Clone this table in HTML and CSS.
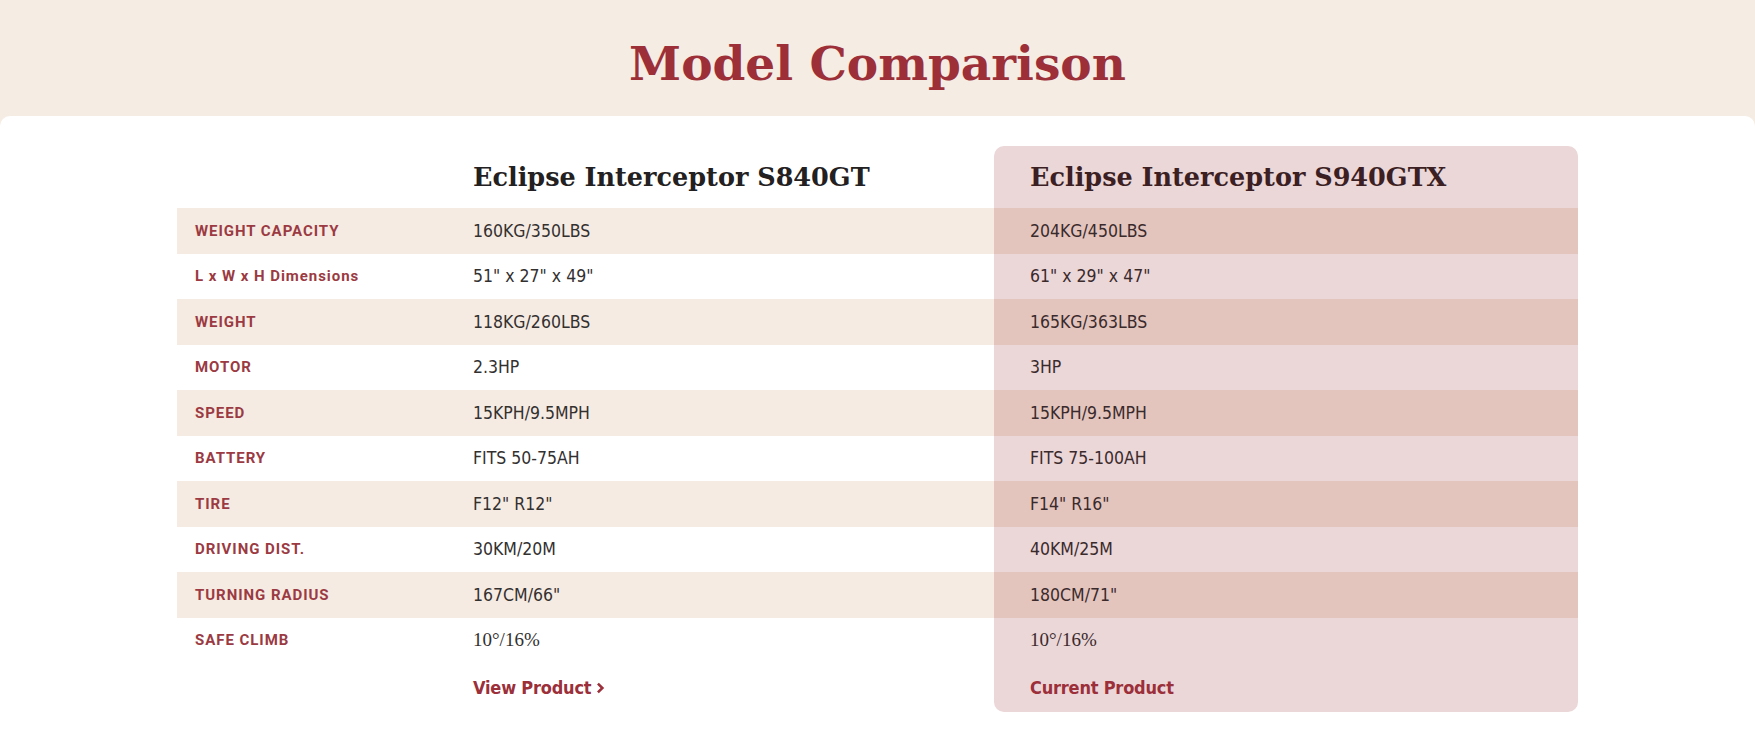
FILE: index.html
```html
<!DOCTYPE html>
<html lang="en">
<head>
<meta charset="utf-8">
<title>Model Comparison</title>
<link rel="stylesheet" href="styles.css">
</head>
<body>
<header class="page-head">
  <h1 class="page-title">Model Comparison</h1>
</header>
<main class="card">
  <div class="compare">
    <div class="row head">
      <div class="cell label"></div>
      <div class="cell val"><h2 class="model">Eclipse Interceptor S840GT</h2></div>
      <div class="cell cur"><h2 class="model">Eclipse Interceptor S940GTX</h2></div>
    </div>
    <div class="row band">
      <div class="cell label">WEIGHT CAPACITY</div>
      <div class="cell val">160KG/350LBS</div>
      <div class="cell cur">204KG/450LBS</div>
    </div>
    <div class="row">
      <div class="cell label">L x W x H Dimensions</div>
      <div class="cell val">51" x 27" x 49"</div>
      <div class="cell cur">61" x 29" x 47"</div>
    </div>
    <div class="row band">
      <div class="cell label">WEIGHT</div>
      <div class="cell val">118KG/260LBS</div>
      <div class="cell cur">165KG/363LBS</div>
    </div>
    <div class="row">
      <div class="cell label">MOTOR</div>
      <div class="cell val">2.3HP</div>
      <div class="cell cur">3HP</div>
    </div>
    <div class="row band">
      <div class="cell label">SPEED</div>
      <div class="cell val">15KPH/9.5MPH</div>
      <div class="cell cur">15KPH/9.5MPH</div>
    </div>
    <div class="row">
      <div class="cell label">BATTERY</div>
      <div class="cell val">FITS 50-75AH</div>
      <div class="cell cur">FITS 75-100AH</div>
    </div>
    <div class="row band">
      <div class="cell label">TIRE</div>
      <div class="cell val">F12" R12"</div>
      <div class="cell cur">F14" R16"</div>
    </div>
    <div class="row">
      <div class="cell label">DRIVING DIST.</div>
      <div class="cell val">30KM/20M</div>
      <div class="cell cur">40KM/25M</div>
    </div>
    <div class="row band">
      <div class="cell label">TURNING RADIUS</div>
      <div class="cell val">167CM/66"</div>
      <div class="cell cur">180CM/71"</div>
    </div>
    <div class="row">
      <div class="cell label">SAFE CLIMB</div>
      <div class="cell val deg">10°/16%</div>
      <div class="cell cur deg">10°/16%</div>
    </div>
    <div class="row foot">
      <div class="cell label"></div>
      <div class="cell val"><a class="link" href="#">View Product <svg class="chev" viewBox="0 0 10 14" width="9" height="12"><path d="M2 1.8 L7.2 7 L2 12.2" fill="none" stroke="currentColor" stroke-width="3"/></svg></a></div>
      <div class="cell cur"><span class="link">Current Product</span></div>
    </div>
  </div>
</main>
</body>
</html>
```

FILE: styles.css
```css
* { box-sizing: border-box; }
html, body { margin: 0; padding: 0; }
body {
  background: #f5ece3;
  font-family: "DejaVu Sans Condensed", "Roboto", sans-serif;
  color: #2d2a2a;
}
.page-head {
  padding: 36px 0 24px;
  text-align: center;
}
.page-title {
  margin: 0;
  font-family: "DejaVu Serif", "Liberation Serif", serif;
  font-weight: 700;
  font-size: 47px;
  line-height: 56px;
  color: #9c2f38;
}
.card {
  background: #ffffff;
  border-radius: 10px 10px 0 0;
  padding: 30px 0 25px;
  min-height: 621px;
}
.compare {
  width: 1401px;
  margin: 0 auto;
}
.row {
  display: grid;
  grid-template-columns: 296px 521px 584px;
  height: 45.5px;
}
.row.band { background: #f6ebe2; }
.row.head { height: 62px; }
.row.foot { height: 49px; }
.cell {
  display: flex;
  align-items: center;
}
.label {
  padding-left: 18px;
  font-family: "Roboto", "Liberation Sans", sans-serif;
  font-weight: 700;
  font-size: 15px;
  letter-spacing: 0.95px;
  color: #9b3a42;
}
.val, .cur {
  font-size: 17.5px;
  color: #333030;
}
.cur {
  padding-left: 36px;
  background: #ebd6d8;
  color: #3a2a2c;
}
.row.band .cur { background: #e3c5bd; }
.row.head .cur { border-radius: 10px 10px 0 0; }
.row.foot .cur { border-radius: 0 0 10px 10px; }
.model {
  margin: 0;
  font-family: "DejaVu Serif", "Liberation Serif", serif;
  font-weight: 700;
  font-size: 25.5px;
  color: #232021;
}
.cur .model { color: #3b1f23; }
.deg { font-family: "Liberation Serif", serif; font-size: 19px; }
.link {
  display: inline-flex;
  align-items: center;
  gap: 5px;
  font-size: 18px;
  font-weight: 700;
  letter-spacing: -0.2px;
  color: #9b2f3a;
  text-decoration: none;
}
.chev { display: block; }
```
